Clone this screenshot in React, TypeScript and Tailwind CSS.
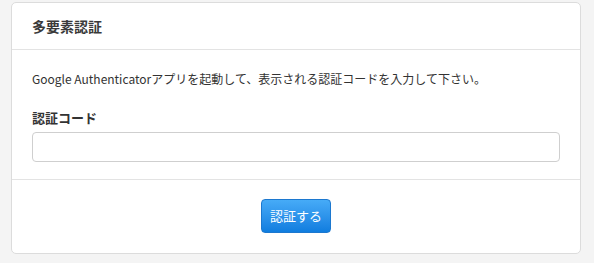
import React from "react";

export default function App() {
  return (
    <div
      className="w-[594px] h-[263px] bg-[#f4f4f4] pl-[11px] pt-[2px]"
      style={{ fontFamily: '"Noto Sans CJK JP", "Liberation Sans", sans-serif' }}
    >
      <div className="w-[570px] h-[252px] bg-white border border-[#dcdcdc] rounded-[5px] flex flex-col">
        <div className="h-[47px] border-b border-[#e3e3e3] flex items-center px-5 text-[14px] font-semibold text-[#3a3a3a]">
          多要素認証
        </div>
        <div className="h-[130px] border-b border-[#e3e3e3] px-5 pt-[20px]">
          <p className="text-[12px] leading-[18px] text-[#333]">
            Google Authenticatorアプリを起動して、表示される認証コードを入力して下さい。
          </p>
          <label className="block mt-[21px] text-[13px] leading-[18px] font-semibold text-[#333]">
            認証コード
          </label>
          <input
            type="text"
            className="mt-[5px] w-[528px] h-[30px] border border-[#cfcfcf] rounded-[4px] bg-white outline-none"
          />
        </div>
        <div className="flex-1 flex justify-center pt-[19px]">
          <button className="w-[70px] h-[34px] rounded-[4px] border border-[#1c78cf] bg-gradient-to-b from-[#46abf7] to-[#0f7ddf] text-white text-[13px]">
            認証する
          </button>
        </div>
      </div>
    </div>
  );
}
